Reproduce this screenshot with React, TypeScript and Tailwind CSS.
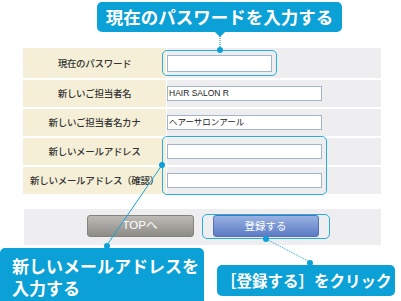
const jp = "font-['Noto_Sans_CJK_JP',sans-serif]";

const rows = [
  { label: '現在のパスワード', value: '', h: 'h-[30px]', input: 'w-[105px] h-[17px]' },
  { label: '新しいご担当者名', value: 'HAIR SALON R', h: 'h-[27px]', input: 'w-[155px] h-[15px]' },
  { label: '新しいご担当者名カナ', value: 'ヘアーサロンアール', h: 'h-[27px]', input: 'w-[155px] h-[15px]' },
  { label: '新しいメールアドレス', value: '', h: 'h-[27px]', input: 'w-[155px] h-[15px]' },
  { label: '新しいメールアドレス（確認）', value: '', h: 'h-[27px]', input: 'w-[155px] h-[15px]' },
];

const Callout = ({ className, children }: { className: string; children: React.ReactNode }) => (
  <div className={`absolute rounded-[5px] bg-[#0ba0d6] text-white font-bold ${jp} ${className}`}>
    {children}
  </div>
);

export default function App() {
  return (
    <div className="relative w-[401px] h-[301px] overflow-hidden bg-white">
      <div className="flex flex-col pt-[48px] pl-[23px] w-[381px]">
        <div className="flex flex-col gap-[2px]">
          {rows.map((r) => (
            <div key={r.label} className={`flex gap-[1px] ${r.h}`}>
              <div
                className={`w-[143px] shrink-0 flex items-center justify-center bg-[#f5efd7] text-[#333] font-medium text-[9.5px] tracking-[-0.3px] whitespace-nowrap ${jp}`}
              >
                {r.label}
              </div>
              <div className="flex-1 flex items-center bg-[#eeeef0]">
                <div
                  className={`${r.input} bg-white border border-[#a3b4c8] flex items-center pl-[1px] text-[8.5px] text-[#222] leading-none whitespace-nowrap font-['Liberation_Sans','Noto_Sans_CJK_JP',sans-serif]`}
                >
                  {r.value}
                </div>
              </div>
            </div>
          ))}
        </div>

        <div className="mt-[15px] h-[36px] bg-[#eeeef0] flex justify-center items-start pt-[6px] gap-[19px] ml-[1px]">
          <button className="w-[107px] h-[22px] rounded-[3px] border border-[#85837e] bg-gradient-to-b from-[#bdbbb5] to-[#8e8c86] text-white text-[11.5px] font-['Liberation_Sans','Noto_Sans_CJK_JP',sans-serif]">
            TOPへ
          </button>
          <button className={`w-[106px] h-[22px] rounded-[3px] border border-[#5672b6] bg-gradient-to-b from-[#9ab2e2] to-[#5b7bc4] text-white text-[10.5px] ${jp}`}>
            登録する
          </button>
        </div>
      </div>

      {/* highlight frames */}
      <div className="absolute left-[162px] top-[50px] w-[115px] h-[26px] rounded-[5px] border-[1.5px] border-[#27ace0]" />
      <div className="absolute left-[162px] top-[136px] w-[165px] h-[59px] rounded-[5px] border-[1.5px] border-[#27ace0]" />
      <div className="absolute left-[202px] top-[214px] w-[128px] h-[25px] rounded-[5px] border-[1.5px] border-[#27ace0]" />

      <svg className="absolute inset-0 pointer-events-none" width="401" height="301">
        <polygon points="214,31 226,31 220,37" fill="#0ba0d6" />
        <line x1="220" y1="36" x2="220" y2="49" stroke="#1aa3d8" strokeWidth="1.2" strokeDasharray="1 1" />
        <circle cx="220" cy="50" r="3" fill="#0ba0d6" />

        <line x1="162" y1="165" x2="107" y2="245" stroke="#1aa3d8" strokeWidth="1" />
        <circle cx="162" cy="165" r="3" fill="#0ba0d6" />
        <circle cx="107" cy="246" r="3" fill="#0ba0d6" />

        <line x1="266" y1="239" x2="310" y2="262" stroke="#1aa3d8" strokeWidth="1" strokeDasharray="1 1" />
        <circle cx="266" cy="239" r="3" fill="#0ba0d6" />
        <circle cx="310" cy="263" r="3" fill="#0ba0d6" />
      </svg>

      <Callout className="left-[97px] top-[2px] w-[245px] h-[30px] flex items-center justify-center text-[17.5px] leading-none">
        現在のパスワードを入力する
      </Callout>
      <Callout className="left-0 top-[248px] w-[204px] h-[60px] pl-[12px] pt-[7px] text-[17px] leading-[21.5px]">
        <div>新しいメールアドレスを</div>
        <div>入力する</div>
      </Callout>
      <Callout className="left-[217px] top-[265px] w-[178px] h-[31px] flex items-center pl-[4px] text-[15.5px] leading-none whitespace-nowrap">
        ［登録する］をクリック
      </Callout>
    </div>
  );
}
